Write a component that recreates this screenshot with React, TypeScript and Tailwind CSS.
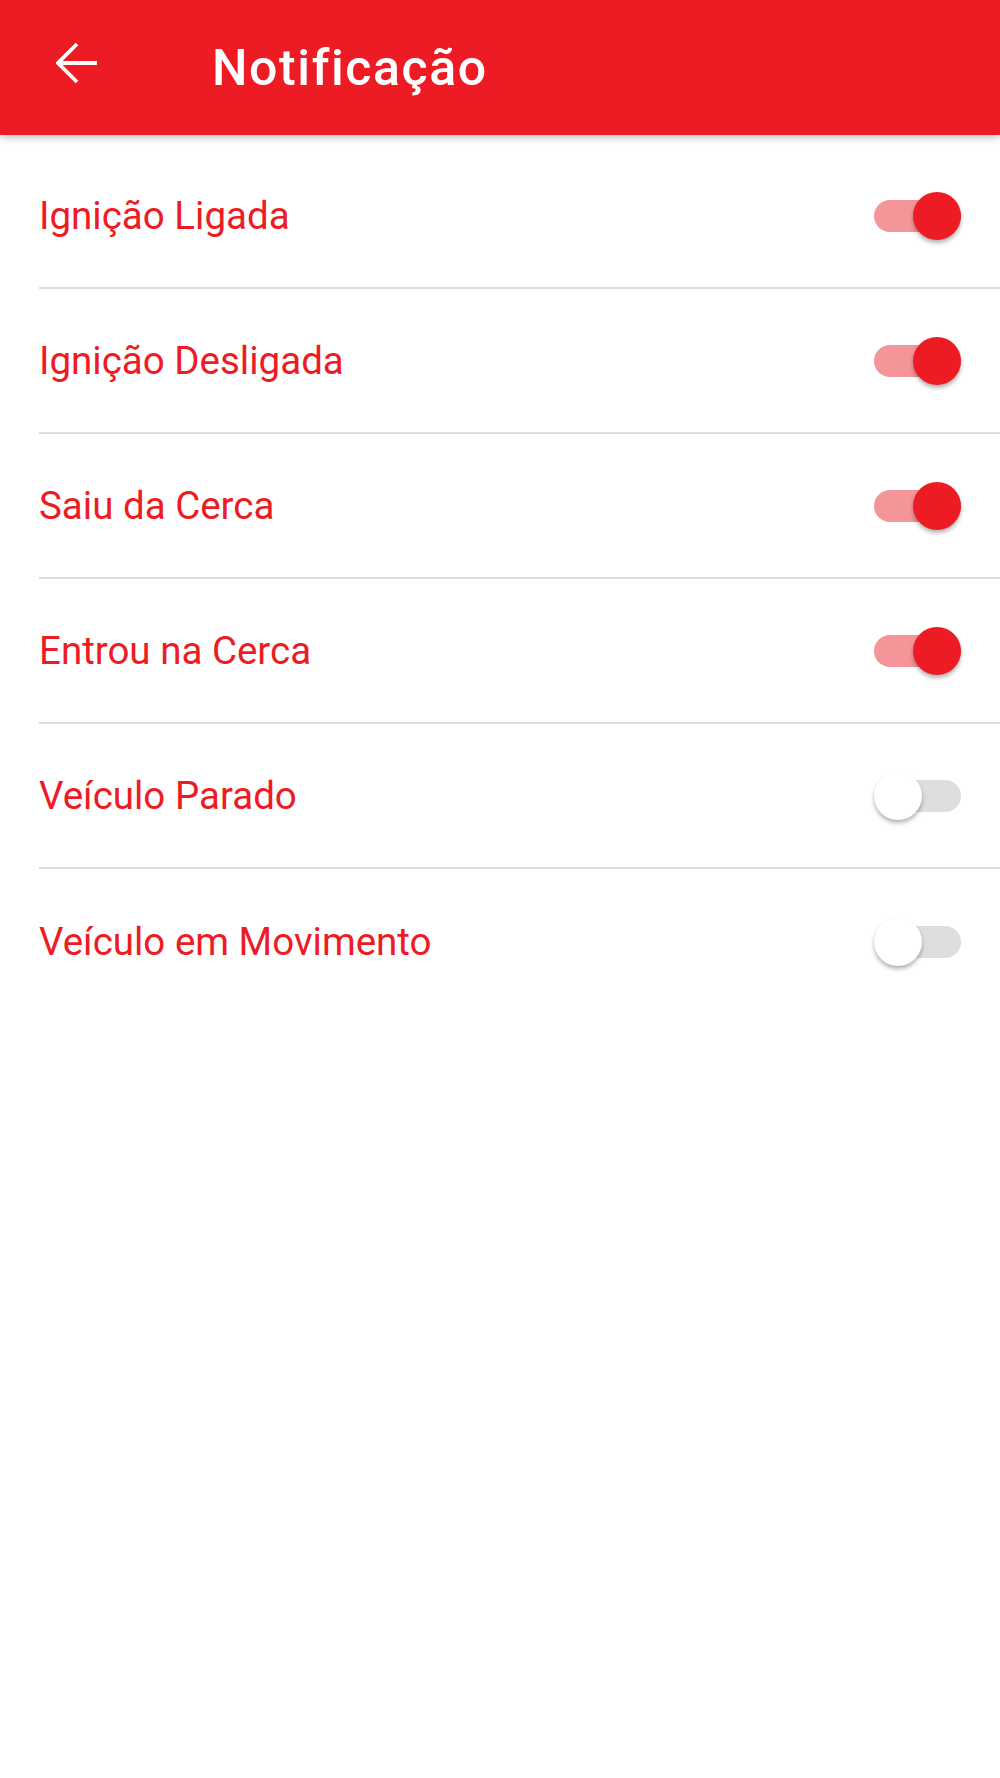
import React, { useState } from "react";

const items = [
  { label: "Ignição Ligada", on: true },
  { label: "Ignição Desligada", on: true },
  { label: "Saiu da Cerca", on: true },
  { label: "Entrou na Cerca", on: true },
  { label: "Veículo Parado", on: false },
  { label: "Veículo em Movimento", on: false },
];

const Toggle: React.FC<{ on: boolean; onClick: () => void }> = ({ on, onClick }) => {
  return (
    <button onClick={onClick} className="relative w-[87px] h-[48px] flex items-center mr-[39px]">
      <div className={`w-[87px] h-[32px] rounded-full ${on ? "bg-[#f4959a]" : "bg-[#dedede]"}`} />
      <div
        className={`absolute top-0 w-[48px] h-[48px] rounded-full shadow-[0_3px_4px_rgba(0,0,0,0.3)] ${
          on ? "right-0 bg-[#ed1c24]" : "left-0 bg-white"
        }`}
      />
    </button>
  );
};

export default function App() {
  const [state, setState] = useState(items.map((i) => i.on));

  return (
    <div className="w-[1000px] h-[1778px] bg-white font-['Roboto',sans-serif]">
      <header className="relative h-[135px] bg-[#ed1c24] flex items-center shadow-[0_2px_8px_rgba(0,0,0,0.28)]">
        <div className="w-[212px] flex items-center pl-[56px] -mt-[8px]">
          <svg width="44" height="44" viewBox="0 0 44 44" fill="none" stroke="white" strokeWidth="3.8">
            <path d="M2 21H41M21 2L2 21L21 40" />
          </svg>
        </div>
        <h1 className="text-white text-[50px] font-medium leading-none tracking-[1.6px]">Notificação</h1>
      </header>
      <div className="pt-[9px]">
        {items.map((item, idx) => (
          <div key={item.label} className="pl-[39px]">
            <div
              className={`h-[145px] flex items-center justify-between ${
                idx < items.length - 1 ? "border-b-2 border-[#dedede]" : ""
              }`}
            >
              <span className="text-[#ed1c24] text-[38.5px] leading-none pt-[2px]">{item.label}</span>
              <Toggle
                on={state[idx]}
                onClick={() => setState((s) => s.map((v, i) => (i === idx ? !v : v)))}
              />
            </div>
          </div>
        ))}
      </div>
    </div>
  );
}
